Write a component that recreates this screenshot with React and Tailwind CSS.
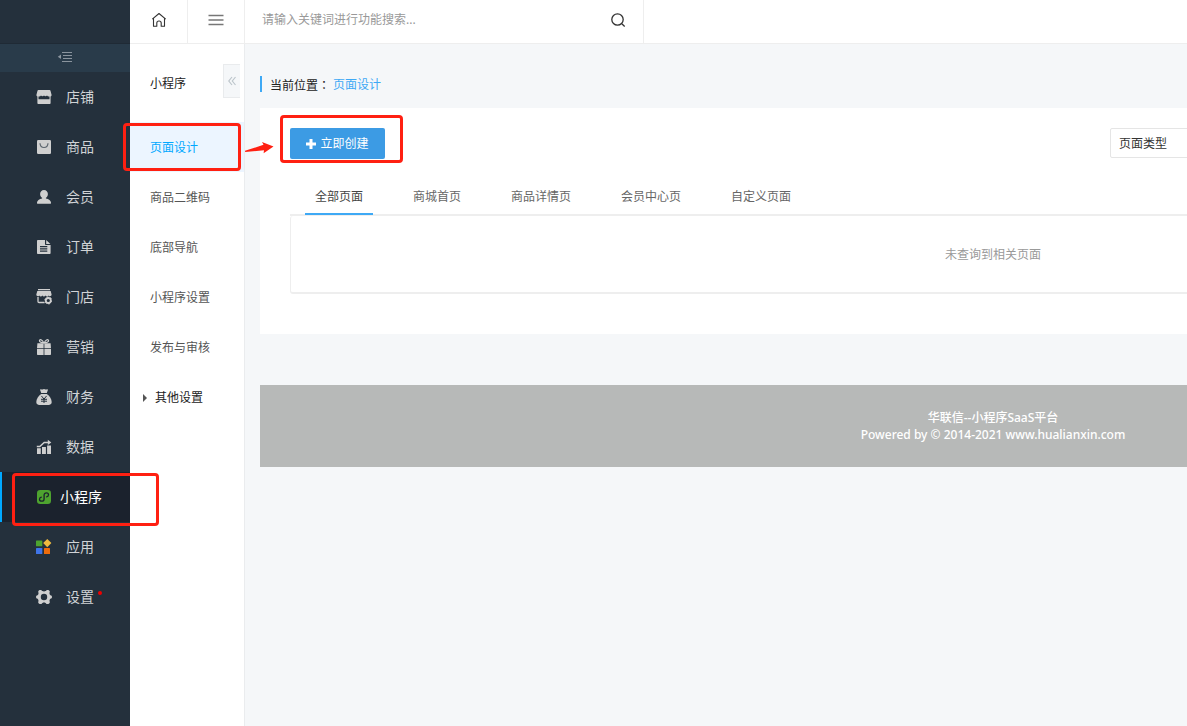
import React from "react";

const icons = {
  shop: (
    <>
      <path fill="#cfcfcf" d="M2.400 1h11.200c.5 0 .8.3.9.7L15.600 6c0 .8-.4 1.300-1 1.500v6.700c0 .5-.4.8-.8.8H2.200c-.5 0-.8-.3-.8-.8V7.500C.8 7.300.400 6.800.400 6l1.100-4.300c.1-.4.4-.7.900-.7z" />
      <path fill="#24303c" d="M2.500 7.400c1 .2 2-.1 2.500-.8.700 1 2.300 1 3 0 .7 1 2.300 1 3 0 .5.700 1.500 1 2.500.8V10.200h-11z" />
    </>
  ),
  goods: (
    <>
      <rect x="1" y="1" width="14" height="14" rx="1.200" fill="#cfcfcf" />
      <path d="M4 4.200c.2 2.600 1.700 4.300 4 4.300s3.800-1.700 4-4.300" fill="none" stroke="#5b646d" strokeWidth="1.200" />
    </>
  ),
  member: (
    <path fill="#cfcfcf" d="M8 .9c2.300 0 3.900 1.700 3.900 4 0 1.700-.8 3.200-2 3.900v.7c2.900.5 5 2.200 5.100 4.100v.6c0 .3-.2.500-.5.500h-13c-.3 0-.5-.2-.5-.5v-.6c.1-1.900 2.200-3.600 5.100-4.100v-.7c-1.200-.7-2-2.200-2-3.900 0-2.300 1.600-4 3.900-4z" />
  ),
  order: (
    <>
      <path fill="#cfcfcf" d="M1.800 1H9v4.300c0 .4.3.7.7.7H14.600v8.200c0 .4-.4.8-.8.8H1.800c-.4 0-.8-.4-.8-.8V1.800c0-.4.4-.8.8-.8zM10.200 1 14.400 5h-4.200z" />
      <path d="M4 7.600h7.300M4 9.900h7.300M4 12.100h7.300" stroke="#24303c" strokeWidth="1.100" />
    </>
  ),
  store: (
    <>
      <path fill="#cfcfcf" d="M2 0h12v1.200H2zM1.300 2h13.400l.9 3.600c0 1.800-2.300 2.200-3 .8-.8 1.300-2.400 1.300-3.100 0-.8 1.300-2.400 1.300-3.100 0-.8 1.300-2.400 1.300-3.100 0C2.500 7.800.300 7.400.300 5.600z" />
      <path d="M2 8v4.500c0 .6.400 1 1 1h5.600" fill="none" stroke="#cfcfcf" strokeWidth="1.300" />
      <circle cx="12.300" cy="11.500" r="2.500" fill="none" stroke="#cfcfcf" strokeWidth="1.800" />
      <circle cx="12.300" cy="11.500" r="3.500" fill="none" stroke="#cfcfcf" strokeWidth="1" strokeDasharray="1.600 2.060" />
    </>
  ),
  gift: (
    <>
      <path fill="#cfcfcf" d="M1.400 4.200h6.200v5H1zM8.400 4.200h6.200l.4 5H8.400zM1 9.900h6.600V16H2c-.6 0-1-.4-1-1zM8.400 9.900H15V15c0 .6-.4 1-1 1H8.400z" />
      <path d="M7.800 4C6.500 1 4.300.100 3.600 1.200 3 2.500 4.800 3.900 7.800 4zM8.200 4c1.300-3 3.500-3.900 4.200-2.800C13 2.500 11.200 3.900 8.200 4z" fill="none" stroke="#cfcfcf" strokeWidth="1.200" />
    </>
  ),
  finance: (
    <>
      <path fill="#cfcfcf" d="M4.300.400c.8-.5 1.500.2 2.200.100.600-.1 1-.4 1.500-.4s.9.300 1.500.400c.7.100 1.400-.6 2.200-.1.400.3.200.8 0 1.200L10.800 4H5.200L4.300 1.600c-.2-.4-.4-.9 0-1.200zM5.200 4.900h5.600c2.700 1.700 4.900 5 4.900 8.200 0 1.800-1 2.800-2.700 2.800H3C1.300 15.900.300 14.900.300 13.100c0-3.200 2.200-6.500 4.900-8.200z" />
      <path d="m5.400 6.900 2.600 3.200 2.600-3.200M5 10.300h6M5 12.200h6M8 10v4" fill="none" stroke="#24303c" strokeWidth="1" />
    </>
  ),
  data: (
    <>
      <path fill="#cfcfcf" d="M1 9.300h3.800V15H1zM6 7.900h3.900V15H6zM11.100 6.600H15V15h-3.900z" />
      <path d="M.8 7.500h3L8.200 3.400h4.400" fill="none" stroke="#cfcfcf" strokeWidth="1.500" />
      <path fill="#cfcfcf" d="M11.800.800 15.300 3.400l-3.500 2.700z" />
    </>
  ),
  mini: (
    <>
      <rect x="1" y="1" width="14" height="14" rx="3.200" fill="#4ea32f" />
      <path d="M5.300 8.100C4.100 8.400 3.500 9.200 3.500 10.200c0 1.200 1 2 2.200 2 1.400 0 2.400-.9 2.400-2.200V6c0-1.300 1-2.200 2.300-2.200 1.200 0 2.100.8 2.100 1.900 0 1-.6 1.900-1.800 2.200" fill="none" stroke="#1b222d" strokeWidth="1.300" strokeLinecap="round" />
    </>
  ),
  apps: (
    <>
      <rect x="0" y="1.500" width="6.300" height="5.800" rx=".6" fill="#4ea32f" />
      <rect x="0" y="9" width="6.300" height="6" rx=".6" fill="#3f74e8" />
      <rect x="8" y="9" width="6" height="6" rx=".6" fill="#ed6c0c" />
      <path d="m11.300 0 4.100 4.100-4.100 4.100-4.100-4.100z" fill="#efbb3e" />
    </>
  ),
  settings: (
    <path
      fill="#cfcfcf"
      fillRule="evenodd"
      d="M3.600 1.100 5 .9c.6 0 .9.9 1.500 1.200.8.400 2.200.400 3 0C10.100 1.800 10.400.900 11 .900l1.400.200c.9.500 1.300 1 1.400 1.500.1.600-.4 1.100-.3 1.800.1.900.7 1.700 1.500 2.100.5.200.9.400.9.800v1.400c0 .4-.4.600-.9.800-.8.400-1.400 1.200-1.500 2.100-.1.700.4 1.200.3 1.800-.1.500-.5 1-1.400 1.500l-1.400.2c-.6 0-.9-.9-1.500-1.200-.8-.4-2.200-.4-3 0-.6.300-.9 1.200-1.500 1.200l-1.400-.2c-.9-.5-1.300-1-1.400-1.500-.1-.6.400-1.100.3-1.800C2.400 10.700 1.800 9.900 1 9.500.5 9.300.100 9.100.100 8.700V7.300c0-.4.400-.6.900-.8.8-.4 1.400-1.200 1.500-2.100.1-.7-.4-1.200-.3-1.800.1-.5.5-1 1.400-1.500zM8 4.800a3.200 3.200 0 1 0 0 6.400 3.200 3.200 0 0 0 0-6.400z"
    />
  ),
};

const mainNav = [
  ["shop", "店铺"],
  ["goods", "商品"],
  ["member", "会员"],
  ["order", "订单"],
  ["store", "门店"],
  ["gift", "营销"],
  ["finance", "财务"],
  ["data", "数据"],
  ["mini", "小程序"],
  ["apps", "应用"],
  ["settings", "设置"],
];

const subNav = ["页面设计", "商品二维码", "底部导航", "小程序设置", "发布与审核"];
const tabs = ["全部页面", "商城首页", "商品详情页", "会员中心页", "自定义页面"];

function Callout({ className }) {
  return (
    <span
      aria-hidden="true"
      className={`pointer-events-none absolute z-10 rounded-[4px] border-[3px] border-[#ff2012] ${className}`}
    />
  );
}

function Sidebar() {
  return (
    <aside className="w-[130px] shrink-0 bg-[#24303c]">
      <div className="h-11 border-b border-[#1f2a35]" />
      <button aria-label="收起菜单" className="flex h-7 w-full items-center justify-center bg-[#293b4a] pb-0.5">
        <svg width="16" height="10" viewBox="0 0 16 10" aria-hidden="true">
          <path d="M5 .5h10M6 3.500h9M6 6.500h9M5 9.500h10" stroke="#8a949e" strokeWidth="1" />
          <path d="M4 2.500v4.600L.8 4.800z" fill="#8a949e" />
        </svg>
      </button>
      <nav>
        {mainNav.map(([icon, label]) => {
          const active = icon === "mini";
          return (
            <a
              key={icon}
              href="#"
              aria-current={active ? "page" : undefined}
              className={`relative flex h-[50px] items-center text-[14px] leading-5 ${
                active
                  ? "gap-2 border-l-2 border-[#00a8ff] bg-[#1b222d] pl-[34px] text-white"
                  : "gap-3.5 pl-9 text-[#d0d3d6]"
              }`}
            >
              <svg width="16" height="16" viewBox="0 0 16 16" aria-hidden="true" className="shrink-0">
                {icons[icon]}
              </svg>
              <span className="relative">
                {label}
                {icon === "settings" && (
                  <span className="absolute -right-2 top-1 size-1 rounded-full bg-[#f00000]" />
                )}
              </span>
              {active && <Callout className="left-[10px] top-px h-[53px] w-[147px]" />}
            </a>
          );
        })}
      </nav>
    </aside>
  );
}

function Header() {
  return (
    <header className="flex h-11 border-b border-[#eeeeee] bg-white">
      <a href="#" aria-label="首页" className="flex w-[58px] items-center justify-center border-r border-[#eeeeee] pb-1">
        <svg width="16" height="16" viewBox="0 0 16 16" fill="none" stroke="#333" strokeWidth="1.100" aria-hidden="true">
          <path d="M1.300 7.200 8 1.500l6.700 5.700M2.500 6.500v7.800h3.300V11c0-1.200.9-2 2.200-2s2.200.8 2.200 2v3.300h3.300V6.500" strokeLinejoin="round" />
        </svg>
      </a>
      <button aria-label="菜单" className="flex w-[57px] items-center justify-center border-r border-[#eeeeee] pb-1">
        <svg width="16" height="12" viewBox="0 0 16 12" aria-hidden="true">
          <path d="M.5 1.500h15M.5 6h15M.5 10.500h15" stroke="#777" strokeWidth="1.400" />
        </svg>
      </button>
      <form className="flex w-[399px] items-center border-r border-[#eeeeee] pb-1 pl-[17px] pr-[17px]">
        <input
          type="text"
          aria-label="功能搜索"
          placeholder="请输入关键词进行功能搜索..."
          className="min-w-0 flex-1 text-[12px] leading-5 outline-none placeholder:text-[#999]"
        />
        <button type="button" aria-label="搜索">
          <svg width="16" height="16" viewBox="0 0 16 16" fill="none" stroke="#333" strokeWidth="1.300" aria-hidden="true">
            <circle cx="7.500" cy="7.500" r="5.700" />
            <path d="m11.800 11.800 2.900 2.700" />
          </svg>
        </button>
      </form>
    </header>
  );
}

function SubMenu() {
  return (
    <aside className="w-[115px] shrink-0 border-r border-[#eaecee] bg-white text-[12px] leading-4 text-[#555]">
      <div className="flex h-[78px] justify-between pl-5 pr-1 pt-5">
        <h2 className="pt-3 text-[#222]">小程序</h2>
        <button aria-label="收起" className="flex h-[34px] w-[17px] items-center justify-center border border-r-0 border-[#e9ebed] bg-[#f5f7f9]">
          <svg width="8" height="10" viewBox="0 0 8 10" fill="none" stroke="#bcc5cb" strokeWidth="1.200" aria-hidden="true">
            <path d="M4 1 .8 5 4 9M7.500 1 4.300 5l3.200 4" />
          </svg>
        </button>
      </div>
      <nav>
        {subNav.map((label, i) => (
          <a
            key={label}
            href="#"
            className={`relative flex h-[50px] items-center pl-5 pt-0.5 ${i === 0 ? "bg-[#ecf5ff] text-[#00a8ff]" : ""}`}
          >
            {label}
            {i === 0 && (
              <>
                <Callout className="-left-[7px] top-px h-12 w-[118px]" />
                <svg className="absolute left-[115px] top-5 z-10" width="30" height="20" viewBox="0 0 30 20" aria-hidden="true">
                  <path d="M0 8.800 18.500 2.800 17 0l11.500 4.500L18.600 11.200l.4-3L.2 10z" fill="#ff2012" />
                </svg>
              </>
            )}
          </a>
        ))}
        <a href="#" className="flex h-[50px] items-center gap-2 pl-[13px] pt-0.5 text-[#222]">
          <svg width="4" height="8" viewBox="0 0 4 8" aria-hidden="true">
            <path d="M0 0l4 4-4 4z" fill="#555" />
          </svg>
          其他设置
        </a>
      </nav>
    </aside>
  );
}

function Content() {
  return (
    <main className="min-w-[1496px] flex-1 px-[15px] text-[12px] leading-4">
      <div className="pb-4 pt-8">
        <div className="flex h-4 border-l-2 border-[#3ea9f5] pl-2 leading-[18px]">
          <span className="text-[#222]">
            当前位置<span className="font-['Noto_Sans_CJK_TC',sans-serif]">：</span>
          </span>
          <a href="#" className="ml-[3px] text-[#3ea9f5]">页面设计</a>
        </div>
      </div>
      <section className="bg-white px-[30px] pb-10 pt-5">
        <div className="flex h-[31px] items-start justify-between">
          <div className="relative">
            <button className="flex h-[31px] w-[95px] items-center justify-center gap-1 rounded-[2px] bg-[#3c9be4] text-white">
              <svg width="10" height="10" viewBox="0 0 10 10" aria-hidden="true">
                <path d="M5 0v10M0 5h10" stroke="#fff" strokeWidth="3" />
              </svg>
              立即创建
            </button>
            <Callout className="-left-[10px] -top-[13px] h-12 w-[123px]" />
          </div>
          <div className="w-[586px]">
            <select aria-label="页面类型" className="h-[30px] w-44 appearance-none rounded-[2px] border border-[#e5e5e5] bg-white px-2 pt-0.5 text-[#333]">
              <option>页面类型</option>
            </select>
          </div>
        </div>
        <div role="tablist" className="mt-5 flex gap-[30px] border-b-2 border-[#eeeeee] px-[15px]">
          {tabs.map((tab, i) => (
            <button
              key={tab}
              role="tab"
              aria-selected={i === 0}
              className={`-mb-px h-9 border-b-2 px-2.5 pt-0.5 ${
                i === 0 ? "border-[#3ea9f5] text-[#444]" : "border-transparent text-[#666]"
              }`}
            >
              {tab}
            </button>
          ))}
        </div>
        <div className="flex h-[78px] items-center justify-center rounded-[3px] border border-b-2 border-t-0 border-[#eeeeee] pt-0.5 text-[#999]">
          未查询到相关页面
        </div>
      </section>
      <footer className="mt-[51px] flex h-[82px] flex-col items-center justify-center bg-[#b7b9b8] text-center font-medium leading-[17px] text-white">
        <p>华联信--小程序SaaS平台</p>
        <p>Powered by © 2014-2021 www.hualianxin.com</p>
      </footer>
    </main>
  );
}

export default function App() {
  return (
    <div className="flex min-h-screen overflow-hidden bg-[#f5f7f9] font-['Noto_Sans','Noto_Sans_CJK_SC',sans-serif]">
      <Sidebar />
      <div className="flex min-w-0 flex-1 flex-col">
        <Header />
        <div className="flex flex-1">
          <SubMenu />
          <Content />
        </div>
      </div>
    </div>
  );
}
